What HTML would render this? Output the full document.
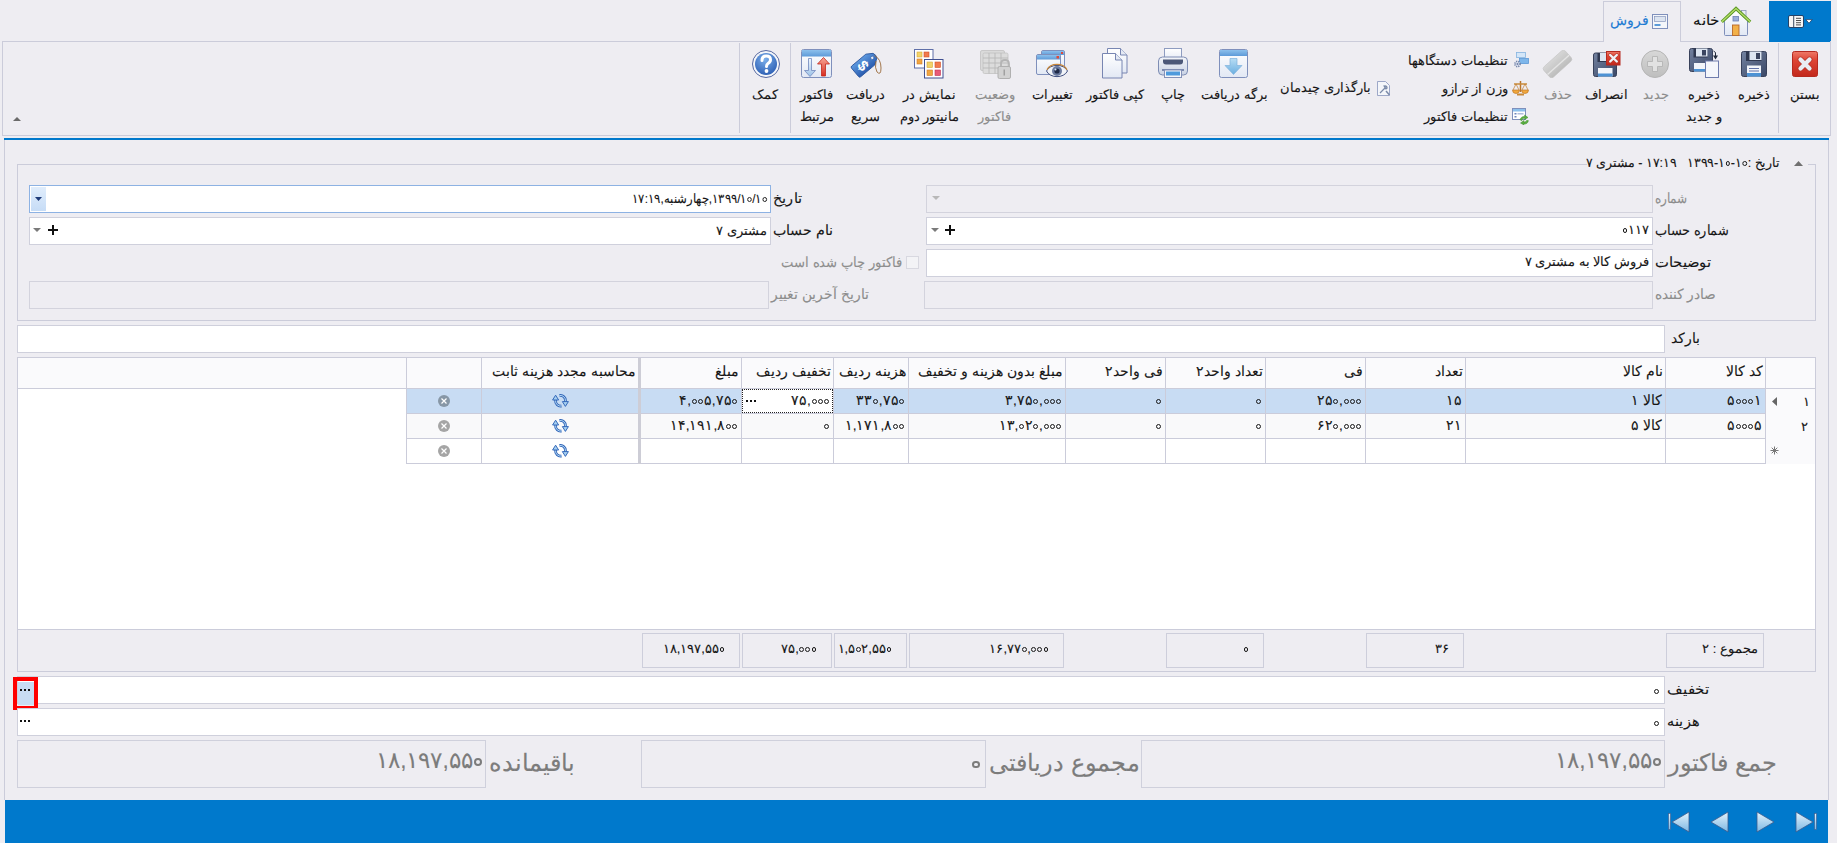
<!DOCTYPE html>
<html lang="fa">
<head>
<meta charset="utf-8">
<style>
*{box-sizing:border-box}
html,body{margin:0;padding:0}
body{width:1837px;height:843px;overflow:hidden;background:#EEEDF2;font-family:"Liberation Sans",sans-serif;font-size:13px;color:#161616;position:relative;-webkit-text-stroke:0.12px currentColor}
.a{position:absolute}
.t{position:absolute;white-space:nowrap;direction:rtl;line-height:16px}
.ln{position:absolute;background:#CBCCDA}
.fld{position:absolute;background:#fff;border:1px solid #CFD0DC}
.dis{position:absolute;background:#EEEDF2;border:1px solid #D3D3DD}
.gray{color:#8d8d8d}
.rb{position:absolute;text-align:center;direction:rtl;white-space:nowrap;line-height:22px}
.fc{position:absolute;border:1px solid #CDCEDB;background:#EEEDF2}
.n{unicode-bidi:isolate-override;direction:ltr}
.z{display:inline-block;width:0.37em;height:0.37em;border:1.2px solid currentColor;border-radius:50%;margin:0 0.05em;vertical-align:0.07em}
.bg .z{border-width:2px;width:0.36em;height:0.36em}
.dots{position:absolute;width:10px;height:2px;background:linear-gradient(90deg,#111 0,#111 2px,transparent 2px,transparent 4px,#111 4px,#111 6px,transparent 6px,transparent 8px,#111 8px,#111 10px)}
</style>
</head>
<body>
<div class="ln" style="left:2px;top:41px;width:1601px;height:1px"></div>
<div class="ln" style="left:1681px;top:41px;width:150px;height:1px"></div>
<div class="a" style="left:1603px;top:1px;width:78px;height:41px;border:1px solid #CBCCDA;border-bottom:none;background:#EEEDF2"></div>
<div class="t" style="right:188px;top:13px;font-size:13.5px;color:#1C7AD2">فروش</div>
<div class="t" style="left:1693px;top:12px;font-size:14px;transform:scaleX(1.087);transform-origin:0 50%;color:#111">خانه</div>
<div class="a" style="left:1769px;top:1px;width:62px;height:41px;background:#0079CC"></div>
<div class="a" style="left:2px;top:41px;width:1829px;height:95px;border:1px solid #CBCCDA;border-top:none"></div>
<div class="ln" style="left:1778px;top:43px;width:1px;height:90px"></div>
<div class="ln" style="left:790px;top:43px;width:1px;height:90px"></div>
<div class="ln" style="left:739px;top:43px;width:1px;height:90px"></div>
<svg class="a" style="left:12px;top:116px" width="10" height="6"><path d="M1 5 L5 1 L9 5 Z" fill="#6a6a6a"/></svg>
<!-- ===== RIBBON ICONS ===== -->
<svg class="a" style="left:1792px;top:51px" width="26" height="26" viewBox="0 0 26 26">
 <defs><linearGradient id="gRed" x1="0" y1="0" x2="0" y2="1"><stop offset="0" stop-color="#EE7A68"/><stop offset="0.35" stop-color="#DE4535"/><stop offset="1" stop-color="#C2281C"/></linearGradient></defs>
 <rect x="0.5" y="0.5" width="25" height="25" rx="2" fill="url(#gRed)" stroke="#B52A20"/>
 <path d="M8.5 8.5 L17.5 17.5 M17.5 8.5 L8.5 17.5" stroke="#B8382C" stroke-width="5.8" stroke-linecap="round"/>
 <path d="M8.5 8.5 L17.5 17.5 M17.5 8.5 L8.5 17.5" stroke="#E9EEF3" stroke-width="4.2" stroke-linecap="round"/>
</svg>
<svg class="a" style="left:1741px;top:51px" width="26" height="26" viewBox="0 0 26 26">
 <defs><linearGradient id="gFl" x1="0" y1="0" x2="1" y2="1"><stop offset="0" stop-color="#7382A0"/><stop offset="1" stop-color="#3A4766"/></linearGradient></defs>
 <rect x="0.5" y="0.5" width="25" height="25" rx="2" fill="url(#gFl)" stroke="#38415A"/>
 <rect x="5" y="0.5" width="15.5" height="9.5" fill="#2F3850"/>
 <rect x="8.5" y="0.5" width="12" height="8.5" fill="#DDE6F2"/>
 <rect x="15" y="2" width="4" height="6" fill="#3A4560"/>
 <rect x="6" y="14.5" width="14" height="11" fill="#F2F5FA"/>
 <rect x="8" y="17" width="10" height="1" fill="#6272A8"/>
 <rect x="8" y="19.5" width="10" height="1" fill="#6272A8"/>
 <rect x="6" y="22" width="14" height="3.5" fill="#4D92D4"/>
</svg>
<svg class="a" style="left:1689px;top:48px" width="32" height="31" viewBox="0 0 32 31">
 <rect x="0.5" y="0.5" width="23" height="23" rx="2" fill="url(#gFl)" stroke="#38415A"/>
 <rect x="4.5" y="0.5" width="14" height="9" fill="#2F3850"/>
 <rect x="7" y="0.5" width="11.5" height="8" fill="#DDE6F2"/>
 <rect x="13" y="2" width="4" height="5.5" fill="#3A4560"/>
 <rect x="5" y="15" width="15" height="8.5" fill="#F2F5FA"/>
 <rect x="5" y="21" width="15" height="2.5" fill="#4D92D4"/>
 <rect x="16.5" y="13" width="13" height="16.5" fill="#F4F6FB" stroke="#6E7CAD"/>
 <path d="M24.5 3 Q27.5 3.5 26.5 8" fill="none" stroke="#222A3A" stroke-width="1"/>
 <path d="M24 7.5 L29 7.5 L26.5 11.5 Z" fill="#222A3A"/>
</svg>
<svg class="a" style="left:1641px;top:50px" width="28" height="28" viewBox="0 0 28 28">
 <defs><linearGradient id="gGr" x1="0" y1="0" x2="0" y2="1"><stop offset="0" stop-color="#D8D8D8"/><stop offset="1" stop-color="#BEBEBE"/></linearGradient></defs>
 <circle cx="14" cy="14" r="13.5" fill="url(#gGr)" stroke="#B4B4B4"/>
 <path d="M11.5 6.5 h5 v5 h5 v5 h-5 v5 h-5 v-5 h-5 v-5 h5 z" fill="#E2E2E2" stroke="#B0B0B0" stroke-width="0.8"/>
</svg>
<svg class="a" style="left:1593px;top:51px" width="28" height="27" viewBox="0 0 28 27">
 <rect x="0.5" y="2" width="23" height="23.5" rx="2" fill="url(#gFl)" stroke="#38415A"/>
 <rect x="4.5" y="2" width="13" height="9" fill="#2F3850"/>
 <rect x="7" y="2" width="10" height="8" fill="#DDE6F2"/>
 <rect x="5" y="17" width="14.5" height="8.5" fill="#F2F5FA"/>
 <rect x="5" y="22.5" width="14.5" height="3" fill="#4D92D4"/>
 <rect x="13.5" y="0.5" width="13.5" height="13.5" fill="url(#gRed)" stroke="#B52A20"/>
 <path d="M17.2 4 L23.8 10.5 M23.8 4 L17.2 10.5" stroke="#B8382C" stroke-width="3.6" stroke-linecap="round"/>
 <path d="M17.2 4 L23.8 10.5 M23.8 4 L17.2 10.5" stroke="#EEF2F6" stroke-width="2.4" stroke-linecap="round"/>
</svg>
<svg class="a" style="left:1542px;top:50px" width="32" height="28" viewBox="0 0 32 28">
 <defs><linearGradient id="gEr" x1="0" y1="0" x2="0" y2="1"><stop offset="0" stop-color="#D6D6D6"/><stop offset="1" stop-color="#BDBDBD"/></linearGradient></defs>
 <g transform="rotate(-42 15.5 14)">
 <rect x="1" y="7" width="29" height="14" rx="3" fill="url(#gEr)" stroke="#C4C4C4" stroke-width="0.6"/>
 <rect x="1" y="14.5" width="29" height="1.4" fill="#E4E4E4"/>
 </g>
</svg>
<svg class="a" style="left:1219px;top:49px" width="29" height="29" viewBox="0 0 29 29">
 <defs><linearGradient id="gWin" x1="0" y1="0" x2="0" y2="1"><stop offset="0" stop-color="#FFFFFF"/><stop offset="1" stop-color="#E2E8F4"/></linearGradient>
 <linearGradient id="gBar" x1="0" y1="0" x2="0" y2="1"><stop offset="0" stop-color="#8CC0EC"/><stop offset="1" stop-color="#5D9AD8"/></linearGradient>
 <linearGradient id="gArr" x1="0" y1="0" x2="0" y2="1"><stop offset="0" stop-color="#B8DDF4"/><stop offset="1" stop-color="#6AAEE0"/></linearGradient></defs>
 <rect x="0.5" y="0.5" width="28" height="28" rx="2" fill="url(#gWin)" stroke="#7F90BC"/>
 <rect x="1" y="1" width="27" height="6" fill="url(#gBar)"/>
 <path d="M11 9.5 h7 v7 h5 l-8.5 9 l-8.5 -9 h5 z" fill="url(#gArr)" stroke="#7FB2DC" stroke-width="0.7"/>
</svg>
<svg class="a" style="left:1158px;top:48px" width="30" height="30" viewBox="0 0 30 30">
 <defs><linearGradient id="gPr" x1="0" y1="0" x2="0" y2="1"><stop offset="0" stop-color="#F4F6FA"/><stop offset="1" stop-color="#C9D2E4"/></linearGradient></defs>
 <rect x="6.5" y="0.5" width="17" height="13" fill="url(#gWin)" stroke="#8E9CC0"/>
 <rect x="0.5" y="9" width="29" height="18" rx="4" fill="url(#gPr)" stroke="#7E8DB4"/>
 <path d="M5 11.5 h20 v2 q0 3 -3 3 h-14 q-3 0 -3 -3 z" fill="#4C5878"/>
 <rect x="4" y="21" width="22" height="2" fill="#7C8AB0"/>
 <rect x="6.5" y="22" width="17" height="7.5" fill="#F4F6FA" stroke="#8391B8"/>
 <rect x="8" y="23.5" width="14" height="4" fill="#4E9ADC"/>
</svg>
<svg class="a" style="left:1102px;top:48px" width="28" height="31" viewBox="0 0 28 31">
 <path d="M5.5 0.5 h13 l6.5 6.5 v18 h-19.5 z" fill="url(#gWin)" stroke="#7886B2"/>
 <path d="M18.5 0.5 v6.5 h6.5" fill="#E4E9F3" stroke="#7886B2"/>
 <path d="M0.5 5.5 h13 l6.5 6.5 v18 h-19.5 z" fill="url(#gWin)" stroke="#7886B2"/>
 <path d="M13.5 5.5 v6.5 h6.5" fill="#E4E9F3" stroke="#7886B2"/>
</svg>
<svg class="a" style="left:1036px;top:50px" width="33" height="29" viewBox="0 0 33 29">
 <rect x="5.5" y="0.5" width="23" height="20" rx="1.5" fill="url(#gWin)" stroke="#7F90BC"/>
 <rect x="6" y="1" width="22" height="4" fill="url(#gBar)"/>
 <rect x="25" y="2" width="2" height="2" fill="#E04A3A"/>
 <rect x="0.5" y="4.5" width="24" height="20" rx="1.5" fill="url(#gWin)" stroke="#7F90BC"/>
 <rect x="1" y="5" width="23" height="4.5" fill="url(#gBar)"/>
 <rect x="20.5" y="6" width="2.5" height="2.5" fill="#E04A3A"/>
 <path d="M10.5 21 C14 13.5 28 13.5 31.5 21 C28 28.5 14 28.5 10.5 21 Z" fill="#F2F4F8" stroke="#3E4E80" stroke-width="1"/>
 <path d="M11 19.8 C14.5 12.5 27.5 12.5 31 19.8" fill="none" stroke="#C8883C" stroke-width="1.3"/>
 <circle cx="21" cy="21" r="5" fill="#6B7BA0"/>
 <circle cx="21" cy="21" r="2.6" fill="#1F2A48"/>
 <circle cx="19.5" cy="19.5" r="1" fill="#D8E4F4"/>
</svg>
<svg class="a" style="left:980px;top:50px" width="31" height="29" viewBox="0 0 31 29">
 <g fill="#DADADA" stroke="#C2C2C2" stroke-width="0.8">
 <rect x="0.5" y="0.5" width="24" height="20" rx="1.5"/>
 <rect x="3" y="3" width="25" height="20.5" rx="1.5" fill="#DCDCDC"/>
 </g>
 <path d="M3 8 h25 M3 13 h25 M3 18 h25 M9 3 v20.5 M15 3 v20.5 M21 3 v20.5" stroke="#B8B8B8" stroke-width="0.9"/>
 <path d="M21 17 v-3 q0 -4 4 -4 q4 0 4 4 v3" fill="none" stroke="#B4B4B4" stroke-width="1.8"/>
 <rect x="18" y="16.5" width="12.5" height="12" rx="1.5" fill="#D2D2D2" stroke="#B0B0B0"/>
 <rect x="23.5" y="19.5" width="1.5" height="6" fill="#A0A0A0"/>
</svg>
<svg class="a" style="left:914px;top:49px" width="30" height="30" viewBox="0 0 30 30">
 <rect x="0.5" y="0.5" width="18.5" height="18.5" fill="#FFFFFF" stroke="#5F6FA8"/>
 <rect x="3" y="3" width="5" height="5" fill="#F2D36A" stroke="#D8A838" stroke-width="0.6"/>
 <rect x="10" y="3" width="5" height="5" fill="#F27A4C" stroke="#D0502C" stroke-width="0.6"/>
 <rect x="3" y="10" width="5" height="5" fill="#F2A640" stroke="#D07A28" stroke-width="0.6"/>
 <rect x="10.5" y="10.5" width="18.5" height="18.5" fill="#FFFFFF" stroke="#3F4F90"/>
 <rect x="13" y="13" width="5.5" height="5.5" fill="#F2D36A" stroke="#D8A838" stroke-width="0.6"/>
 <rect x="21" y="13" width="5.5" height="5.5" fill="#F27A4C" stroke="#D0502C" stroke-width="0.6"/>
 <rect x="13" y="21" width="5.5" height="5.5" fill="#F2A640" stroke="#D07A28" stroke-width="0.6"/>
 <rect x="21" y="21" width="5.5" height="5.5" fill="#E85A78" stroke="#C03050" stroke-width="0.6"/>
</svg>
<svg class="a" style="left:850px;top:49px" width="33" height="30" viewBox="0 0 33 30">
 <defs><linearGradient id="gTag" x1="0" y1="0" x2="0" y2="1"><stop offset="0" stop-color="#5C98DE"/><stop offset="1" stop-color="#2A5CB0"/></linearGradient></defs>
 <g transform="rotate(-40 15 15)">
  <path d="M2 9.5 Q2 8 3.5 8 L22 8 L28 12 Q29.5 15 28 18 L22 22 L3.5 22 Q2 22 2 20.5 Z" fill="url(#gTag)" stroke="#24509A" stroke-width="0.8"/>
  <circle cx="24.5" cy="15" r="1.6" fill="#E8EEF8" stroke="#24509A" stroke-width="0.5"/>
  <text x="13" y="20.5" font-family="Liberation Sans" font-weight="bold" font-size="15" fill="#fff" text-anchor="middle" transform="rotate(90 13 15)">$</text>
 </g>
 <path d="M24.5 6.5 Q31 10 31 19 Q31 27 27 23 Q24.5 19 26 12" fill="none" stroke="#9A6A3A" stroke-width="0.9"/>
</svg>
<svg class="a" style="left:801px;top:49px" width="31" height="29" viewBox="0 0 31 29">
 <defs><linearGradient id="gUp" x1="0" y1="0" x2="0" y2="1"><stop offset="0" stop-color="#F8A898"/><stop offset="1" stop-color="#D82A1E"/></linearGradient>
 <linearGradient id="gDn" x1="0" y1="0" x2="0" y2="1"><stop offset="0" stop-color="#F0F6FC"/><stop offset="1" stop-color="#9CC2E8"/></linearGradient></defs>
 <rect x="0.5" y="0.5" width="30" height="28" rx="2" fill="url(#gWin)" stroke="#7F90BC"/>
 <rect x="1" y="1" width="29" height="6.5" fill="url(#gBar)"/>
 <path d="M7.5 9.5 h3 v12 h4 l-5.5 6 l-5.5 -6 h4 z" fill="url(#gDn)" stroke="#6E86BC" stroke-width="0.8"/>
 <path d="M20.5 27 v-12 h-4 l6 -6.5 l6 6.5 h-4 v12 z" fill="url(#gUp)" stroke="#C0281C" stroke-width="0.8"/>
</svg>
<svg class="a" style="left:752px;top:50px" width="28" height="28" viewBox="0 0 28 28">
 <defs><radialGradient id="gHelp" cx="0.45" cy="0.3" r="0.75"><stop offset="0" stop-color="#7AAEEA"/><stop offset="1" stop-color="#2A5CB2"/></radialGradient></defs>
 <circle cx="14" cy="14" r="13.5" fill="#F4F6FA" stroke="#5668A0" stroke-width="1"/>
 <circle cx="14" cy="14" r="11" fill="url(#gHelp)"/>
 <path d="M10 10.5 Q10 6 14.2 6 Q18.5 6 18.5 9.8 Q18.5 12 16 13.5 Q14.5 14.5 14.5 16.5" fill="none" stroke="#fff" stroke-width="3" stroke-linecap="round"/>
 <circle cx="14.5" cy="21" r="1.9" fill="#fff"/>
</svg>
<!-- small ribbon icons -->
<svg class="a" style="left:1513px;top:52px" width="16" height="16" viewBox="0 0 16 16">
 <rect x="3.5" y="0.5" width="9" height="5" fill="#D4E6F8" stroke="#86B4E0" stroke-width="0.8"/>
 <rect x="6.5" y="6.5" width="9" height="5" fill="#7EB6EA" stroke="#5A98D6" stroke-width="0.8"/>
 <circle cx="4.5" cy="12" r="2.6" fill="#E4EAF4" stroke="#7282A8" stroke-width="1.6" stroke-dasharray="1.2 0.9"/>
 <circle cx="4.5" cy="12" r="1.1" fill="#7282A8"/>
</svg>
<svg class="a" style="left:1512px;top:80px" width="17" height="16" viewBox="0 0 17 16">
 <path d="M8.5 1 v11" stroke="#B8742C" stroke-width="1.5"/>
 <path d="M2 4 h13" stroke="#C88A3A" stroke-width="1.5"/>
 <path d="M0.5 10 Q0.5 13.5 4 13.5 Q7.5 13.5 7.5 10 Z" fill="#F2A83C" stroke="#C07A28" stroke-width="0.7"/>
 <path d="M9.5 10 Q9.5 13.5 13 13.5 Q16.5 13.5 16.5 10 Z" fill="#F2A83C" stroke="#C07A28" stroke-width="0.7"/>
 <path d="M4 4 L1 10 M4 4 L7 10 M13 4 L10 10 M13 4 L16 10" stroke="#C07A28" stroke-width="0.7"/>
 <rect x="5" y="13.5" width="7" height="2" fill="#C88A3A"/>
</svg>
<svg class="a" style="left:1512px;top:108px" width="17" height="17" viewBox="0 0 17 17">
 <rect x="0.5" y="0.5" width="13" height="11" fill="#fff" stroke="#7F90BC"/>
 <rect x="1" y="1" width="12" height="2.5" fill="#8CC0EC"/>
 <rect x="2.5" y="5" width="2" height="1.5" fill="#6E86BC"/><rect x="5.5" y="5" width="6" height="1.5" fill="#B0BEDC"/>
 <rect x="2.5" y="8" width="2" height="1.5" fill="#6E86BC"/>
 <path d="M8 12 Q9 8 13 8.5 L12.5 7 L16 9.5 L12.5 11.5 L12.8 10 Q10 10 9.5 13" fill="#5BB040" stroke="#3A8A28" stroke-width="0.5"/>
 <path d="M16.5 12.5 Q15.5 16.5 11.5 16 L12 17 L8.5 15 L12 12.5 L11.7 14 Q14.5 14.5 15 12" fill="#5BB040" stroke="#3A8A28" stroke-width="0.5"/>
</svg>
<svg class="a" style="left:1377px;top:81px" width="14" height="15" viewBox="0 0 14 15">
 <path d="M0.5 0.5 h8 l4 4 v10 h-12 z" fill="#F4F6FA" stroke="#8896BC" stroke-width="0.8"/>
 <path d="M3 12 L8 7 M7 5 Q9 4.5 10 6 Q10.5 7.5 9 8 Z" stroke="#7A8AA8" stroke-width="1.2" fill="#A0AEC8"/>
 <path d="M9 10 L12.5 14" stroke="#7A8AA8" stroke-width="1.5"/>
</svg>
<!-- tab icons -->
<svg class="a" style="left:1652px;top:14px" width="16" height="15" viewBox="0 0 16 15">
 <rect x="0.5" y="0.5" width="15" height="14" fill="#F4F6FA" stroke="#7F90BC"/>
 <rect x="2.5" y="2.5" width="11" height="5" fill="#DCE4F0" stroke="#8896BC" stroke-width="0.7"/>
 <rect x="2.5" y="10" width="6" height="2" fill="#5A9AD8"/>
</svg>
<svg class="a" style="left:1720px;top:5px" width="32" height="32" viewBox="0 0 32 32">
 <rect x="21.5" y="5.5" width="4.5" height="9" fill="#E8ECF4" stroke="#8A96B8" stroke-width="0.8"/>
 <path d="M4.5 15.5 L16 5 L27.5 15.5 L27.5 29.5 Q27.5 30.5 26.5 30.5 L5.5 30.5 Q4.5 30.5 4.5 29.5 Z" fill="url(#gWin)" stroke="#7F8FBA" stroke-width="1"/>
 <path d="M1.8 16.8 L16 3.5 L30.2 16.8" fill="none" stroke="#5E9A28" stroke-width="3.2" stroke-linejoin="miter"/>
 <path d="M1.8 16.8 L16 3.5 L30.2 16.8" fill="none" stroke="#B8E06A" stroke-width="1.2" stroke-linejoin="miter"/>
 <rect x="13" y="11.5" width="5.5" height="4.5" fill="#9AAEDA" stroke="#6E80B4" stroke-width="0.8"/>
 <rect x="12.5" y="20" width="6.5" height="10.5" fill="#F2B048" stroke="#B8682A" stroke-width="0.9"/>
</svg>
<svg class="a" style="left:1788px;top:15px" width="27" height="13" viewBox="0 0 27 13">
 <rect x="0.5" y="0.5" width="15" height="12" rx="1.5" fill="#F6F6F6" stroke="#1C3458" stroke-width="0.9"/>
 <rect x="5.2" y="0.8" width="1" height="11.4" fill="#3A4A60"/>
 <path d="M8 3.3 h5 M8 5.5 h5 M8 7.7 h5 M8 9.9 h5" stroke="#505050" stroke-width="1"/>
 <path d="M17.8 4.6 L24.2 4.6 L21 8.2 Z" fill="#fff" stroke="#1C3458" stroke-width="0.7" stroke-linejoin="round"/>
</svg>


<div class="rb" style="left:1749.6px;top:84px;width:110px">بستن</div>
<div class="rb" style="left:1698.6px;top:84px;width:110px">ذخیره</div>
<div class="rb" style="left:1648.8px;top:84px;width:110px">ذخیره<br>و جدید</div>
<div class="rb gray" style="left:1600.7px;top:84px;width:110px">جدید</div>
<div class="rb" style="left:1551.5px;top:84px;width:110px">انصراف</div>
<div class="rb gray" style="left:1502.6px;top:84px;width:110px">حذف</div>
<div class="t" style="right:329px;top:53px">تنظیمات دستگاهها</div>
<div class="t" style="right:329px;top:81px">وزن از ترازو</div>
<div class="t" style="right:329px;top:109px">تنظیمات فاکتور</div>
<div class="t" style="right:466px;top:80px">بارگذاری چیدمان</div>
<div class="rb" style="left:1179.5px;top:84px;width:110px">برگه دریافت</div>
<div class="rb" style="left:1118.0px;top:84px;width:110px">چاپ</div>
<div class="rb" style="left:1060.3px;top:84px;width:110px">کپی فاکتور</div>
<div class="rb" style="left:997.7px;top:84px;width:110px">تغییرات</div>
<div class="rb gray" style="left:939.7px;top:84px;width:110px">وضعیت<br>فاکتور</div>
<div class="rb" style="left:874.5px;top:84px;width:110px">نمایش در<br>مانیتور دوم</div>
<div class="rb" style="left:810.7px;top:84px;width:110px">دریافت<br>سریع</div>
<div class="rb" style="left:761.5px;top:84px;width:110px">فاکتور<br>مرتبط</div>
<div class="rb" style="left:710.3px;top:84px;width:110px">کمک</div>
<div class="a" style="left:4px;top:138px;width:1825px;height:2px;background:#0079CC"></div>
<div class="ln" style="left:4px;top:140px;width:1px;height:660px"></div>
<div class="ln" style="left:1828px;top:140px;width:1px;height:660px"></div>
<div class="ln" style="left:17px;top:164px;width:1570px;height:1px"></div>
<div class="ln" style="left:1808px;top:164px;width:8px;height:1px"></div>
<div class="ln" style="left:17px;top:164px;width:1px;height:157px"></div>
<div class="ln" style="left:1815px;top:164px;width:1px;height:157px"></div>
<div class="ln" style="left:17px;top:320px;width:1799px;height:1px"></div>
<div class="t" style="right:57px;top:155px;transform:scaleX(0.965);transform-origin:100% 50%">تاریخ :<span class="n">۱۳۹۹-۱<i class="z"></i>-۱<i class="z"></i></span>&nbsp;&nbsp;&nbsp;<span class="n">۱۷:۱۹</span> - مشتری <span class="n">۷</span></div>
<svg class="a" style="left:1793px;top:160px" width="11" height="7"><path d="M1 6 L5.5 1 L10 6 Z" fill="#707070"/></svg>
<div class="dis" style="left:926px;top:185px;width:727px;height:28px"></div>
<svg class="a" style="left:932px;top:196px" width="9" height="5"><path d="M0 0 L8 0 L4 4 Z" fill="#b8b8b8"/></svg>
<div class="t" style="left:1655px;top:190px;font-size:14px;transform:scaleX(0.861);transform-origin:0 50%;color:#8d8d8d">شماره</div>
<div class="fld" style="left:926px;top:217px;width:727px;height:28px"></div>
<svg class="a" style="left:931px;top:228px" width="9" height="5"><path d="M0 0 L8 0 L4 4 Z" fill="#7a7a7a"/></svg>
<svg class="a" style="left:945px;top:225px" width="10" height="10"><path d="M4 0h2v4h4v2h-4v4h-2v-4h-4v-2h4z" fill="#111"/></svg>
<div class="t" style="right:188px;top:222px"><span class="n"><i class="z"></i>۱۱۷</span></div>
<div class="t" style="left:1655px;top:222px;font-size:14px;transform:scaleX(0.923);transform-origin:0 50%;">شماره حساب</div>
<div class="fld" style="left:926px;top:249px;width:727px;height:28px"></div>
<div class="t" style="right:188px;top:254px">فروش کالا به مشتری <span class="n">۷</span></div>
<div class="t" style="left:1655px;top:254px;font-size:14px;transform:scaleX(1.058);transform-origin:0 50%;">توضیحات</div>
<div class="dis" style="left:924px;top:281px;width:729px;height:28px"></div>
<div class="t" style="left:1655px;top:286px;font-size:14px;transform:scaleX(0.983);transform-origin:0 50%;color:#8d8d8d">صادر کننده</div>
<div class="fld" style="left:29px;top:185px;width:742px;height:28px;border-color:#8DB2E3"></div>
<div class="a" style="left:31px;top:187px;width:15px;height:24px;background:linear-gradient(#E0EDFC,#C6DCF6)"></div>
<svg class="a" style="left:35px;top:197px" width="8" height="5"><path d="M0 0 L7 0 L3.5 4 Z" fill="#1E3A78"/></svg>
<div class="t" style="right:1070px;top:191px;transform:scaleX(0.9);transform-origin:100% 50%"><span class="n">۱۳۹۹/۱<i class="z"></i>/۱<i class="z"></i></span>,چهارشنبه,<span class="n">۱۷:۱۹</span></div>
<div class="t" style="left:773px;top:190px;font-size:14px;transform:scaleX(1.037);transform-origin:0 50%;">تاریخ</div>
<div class="fld" style="left:29px;top:217px;width:742px;height:28px"></div>
<svg class="a" style="left:33px;top:228px" width="9" height="5"><path d="M0 0 L8 0 L4 4 Z" fill="#7a7a7a"/></svg>
<svg class="a" style="left:48px;top:225px" width="10" height="10"><path d="M4 0h2v4h4v2h-4v4h-2v-4h-4v-2h4z" fill="#111"/></svg>
<div class="t" style="right:1070px;top:223px">مشتری <span class="n">۷</span></div>
<div class="t" style="left:773px;top:222px;font-size:14px;transform:scaleX(1.018);transform-origin:0 50%;">نام حساب</div>
<div class="a" style="left:906px;top:256px;width:13px;height:13px;border:1px solid #D8D8E0;background:#F3F3F6"></div>
<div class="t" style="left:781px;top:254px;font-size:14px;transform:scaleX(0.938);transform-origin:0 50%;color:#8d8d8d">فاکتور چاپ شده است</div>
<div class="dis" style="left:29px;top:281px;width:740px;height:28px"></div>
<div class="t" style="left:771px;top:286px;font-size:14px;transform:scaleX(0.990);transform-origin:0 50%;color:#8d8d8d">تاریخ آخرین تغییر</div>
<div class="fld" style="left:17px;top:325px;width:1648px;height:28px"></div>
<div class="t" style="left:1671px;top:330px;font-size:14px;transform:scaleX(1.000);transform-origin:0 50%;">بارکد</div>
<div class="a" style="left:17px;top:357px;width:1799px;height:315px;border:1px solid #CBCCDA;background:#fff"></div>
<div class="a" style="left:18px;top:358px;width:1797px;height:30px;background:#FAFAFC"></div>
<div class="ln" style="left:18px;top:388px;width:1797px;height:1px"></div>
<div class="a" style="left:18px;top:630px;width:1797px;height:41px;background:#EEEDF2"></div>
<div class="ln" style="left:18px;top:629px;width:1797px;height:1px"></div>
<div class="a" style="left:1766px;top:389px;width:49px;height:75px;background:#FAFAFC"></div>
<div class="a" style="left:407px;top:389px;width:1358px;height:24px;background:#C8DCF3"></div>
<div class="a" style="left:407px;top:414px;width:1358px;height:24px;background:#F9F9FA"></div>
<div class="ln" style="left:406px;top:413px;width:1359px;height:1px"></div>
<div class="ln" style="left:406px;top:438px;width:1359px;height:1px"></div>
<div class="ln" style="left:406px;top:463px;width:1359px;height:1px"></div>
<div class="ln" style="left:406px;top:358px;width:1px;height:106px"></div>
<div class="ln" style="left:481px;top:358px;width:1px;height:106px"></div>
<div class="ln" style="left:741px;top:358px;width:1px;height:106px"></div>
<div class="ln" style="left:833px;top:358px;width:1px;height:106px"></div>
<div class="ln" style="left:908px;top:358px;width:1px;height:106px"></div>
<div class="ln" style="left:1065px;top:358px;width:1px;height:106px"></div>
<div class="ln" style="left:1165px;top:358px;width:1px;height:106px"></div>
<div class="ln" style="left:1265px;top:358px;width:1px;height:106px"></div>
<div class="ln" style="left:1365px;top:358px;width:1px;height:106px"></div>
<div class="ln" style="left:1465px;top:358px;width:1px;height:106px"></div>
<div class="ln" style="left:1665px;top:358px;width:1px;height:106px"></div>
<div class="ln" style="left:1765px;top:358px;width:1px;height:106px"></div>
<div class="a" style="left:638px;top:358px;width:3px;height:106px;background:#CDCDD6"></div>
<div class="t" style="right:74px;top:363px;font-size:14px">کد کالا</div>
<div class="t" style="right:174px;top:363px;font-size:14px">نام کالا</div>
<div class="t" style="right:374px;top:363px;font-size:14px">تعداد</div>
<div class="t" style="right:474px;top:363px;font-size:14px">فی</div>
<div class="t" style="right:574px;top:363px;font-size:14px">تعداد واحد<span class="n">۲</span></div>
<div class="t" style="right:674px;top:363px;font-size:14px">فی واحد<span class="n">۲</span></div>
<div class="t" style="right:774px;top:363px;font-size:14px">مبلغ بدون هزینه و تخفیف</div>
<div class="t" style="right:931px;top:363px;font-size:14px">هزینه ردیف</div>
<div class="t" style="right:1006px;top:363px;font-size:14px">تخفیف ردیف</div>
<div class="t" style="right:1098px;top:363px;font-size:14px">مبلغ</div>
<div class="t" style="right:1201px;top:363px;font-size:14px">محاسبه مجدد هزینه ثابت</div>
<div class="a" style="left:742px;top:389px;width:91px;height:24px;background:#fff;border:1px dotted #222"></div>
<div class="dots" style="left:746px;top:400px"></div>
<div class="t" style="right:75px;top:393px;font-size:13.6px"><span class="n">۵<i class="z"></i><i class="z"></i><i class="z"></i>۱</span></div>
<div class="t" style="right:175px;top:393px;font-size:13.6px">کالا <span class="n">۱</span></div>
<div class="t" style="right:375px;top:393px;font-size:13.6px"><span class="n">۱۵</span></div>
<div class="t" style="right:475px;top:393px;font-size:13.6px"><span class="n">۲۵<i class="z"></i>,<i class="z"></i><i class="z"></i><i class="z"></i></span></div>
<div class="t" style="right:575px;top:393px;font-size:13.6px"><span class="n"><i class="z"></i></span></div>
<div class="t" style="right:675px;top:393px;font-size:13.6px"><span class="n"><i class="z"></i></span></div>
<div class="t" style="right:775px;top:393px;font-size:13.6px"><span class="n">۳,۷۵<i class="z"></i>,<i class="z"></i><i class="z"></i><i class="z"></i></span></div>
<div class="t" style="right:932px;top:393px;font-size:13.6px"><span class="n">۳۳<i class="z"></i>,۷۵<i class="z"></i></span></div>
<div class="t" style="right:1007px;top:393px;font-size:13.6px"><span class="n">۷۵,<i class="z"></i><i class="z"></i><i class="z"></i></span></div>
<div class="t" style="right:1099px;top:393px;font-size:13.6px"><span class="n">۴,<i class="z"></i><i class="z"></i>۵,۷۵<i class="z"></i></span></div>
<div class="t" style="right:75px;top:418px;font-size:13.6px"><span class="n">۵<i class="z"></i><i class="z"></i><i class="z"></i>۵</span></div>
<div class="t" style="right:175px;top:418px;font-size:13.6px">کالا <span class="n">۵</span></div>
<div class="t" style="right:375px;top:418px;font-size:13.6px"><span class="n">۲۱</span></div>
<div class="t" style="right:475px;top:418px;font-size:13.6px"><span class="n">۶۲<i class="z"></i>,<i class="z"></i><i class="z"></i><i class="z"></i></span></div>
<div class="t" style="right:575px;top:418px;font-size:13.6px"><span class="n"><i class="z"></i></span></div>
<div class="t" style="right:675px;top:418px;font-size:13.6px"><span class="n"><i class="z"></i></span></div>
<div class="t" style="right:775px;top:418px;font-size:13.6px"><span class="n">۱۳,<i class="z"></i>۲<i class="z"></i>,<i class="z"></i><i class="z"></i><i class="z"></i></span></div>
<div class="t" style="right:932px;top:418px;font-size:13.6px"><span class="n">۱,۱۷۱,۸<i class="z"></i><i class="z"></i></span></div>
<div class="t" style="right:1007px;top:418px;font-size:13.6px"><span class="n"><i class="z"></i></span></div>
<div class="t" style="right:1099px;top:418px;font-size:13.6px"><span class="n">۱۴,۱۹۱,۸<i class="z"></i><i class="z"></i></span></div>
<div class="t" style="left:1803px;top:394px"><span class="n">۱</span></div>
<svg class="a" style="left:1772px;top:397px" width="6" height="9"><path d="M5 0 L0 4.5 L5 9 Z" fill="#666"/></svg>
<div class="t" style="left:1801px;top:419px"><span class="n">۲</span></div>
<svg class="a" style="left:1770px;top:446px" width="9" height="9" viewBox="0 0 9 9"><path d="M4.5 0.5v8M0.5 4.5h8M1.7 1.7l5.6 5.6M7.3 1.7l-5.6 5.6" stroke="#777" stroke-width="1"/></svg>
<svg class="a" style="left:438px;top:395px" width="12" height="12"><circle cx="6" cy="6" r="6" fill="#8797A6"/><path d="M3.5 3.5 L8.5 8.5 M8.5 3.5 L3.5 8.5" stroke="#fff" stroke-width="1.2"/></svg>
<svg class="a" style="left:552px;top:394px" width="17" height="14" viewBox="0 0 17 14"><g fill="none"><path d="M9.5 12 A5 5 0 0 1 3.6 6.5 L3.6 5.5" stroke="#3468BA" stroke-width="2.8"/><path d="M7.5 1.5 A5 5 0 0 1 13.4 7 L13.4 8" stroke="#3468BA" stroke-width="2.8"/><path d="M9.5 12 A5 5 0 0 1 3.6 6.5 L3.6 5.5" stroke="#B4D8F4" stroke-width="1"/><path d="M7.5 1.5 A5 5 0 0 1 13.4 7 L13.4 8" stroke="#B4D8F4" stroke-width="1"/></g><path d="M0.6 6 L3.6 1.2 L6.6 6 Z" fill="#A6D0F0" stroke="#3468BA" stroke-width="1" stroke-linejoin="round"/><path d="M10.4 7.6 L13.4 12.4 L16.4 7.6 Z" fill="#A6D0F0" stroke="#3468BA" stroke-width="1" stroke-linejoin="round"/></svg>
<svg class="a" style="left:438px;top:420px" width="12" height="12"><circle cx="6" cy="6" r="6" fill="#A5A5A5"/><path d="M3.5 3.5 L8.5 8.5 M8.5 3.5 L3.5 8.5" stroke="#fff" stroke-width="1.2"/></svg>
<svg class="a" style="left:552px;top:419px" width="17" height="14" viewBox="0 0 17 14"><g fill="none"><path d="M9.5 12 A5 5 0 0 1 3.6 6.5 L3.6 5.5" stroke="#3468BA" stroke-width="2.8"/><path d="M7.5 1.5 A5 5 0 0 1 13.4 7 L13.4 8" stroke="#3468BA" stroke-width="2.8"/><path d="M9.5 12 A5 5 0 0 1 3.6 6.5 L3.6 5.5" stroke="#B4D8F4" stroke-width="1"/><path d="M7.5 1.5 A5 5 0 0 1 13.4 7 L13.4 8" stroke="#B4D8F4" stroke-width="1"/></g><path d="M0.6 6 L3.6 1.2 L6.6 6 Z" fill="#A6D0F0" stroke="#3468BA" stroke-width="1" stroke-linejoin="round"/><path d="M10.4 7.6 L13.4 12.4 L16.4 7.6 Z" fill="#A6D0F0" stroke="#3468BA" stroke-width="1" stroke-linejoin="round"/></svg>
<svg class="a" style="left:438px;top:445px" width="12" height="12"><circle cx="6" cy="6" r="6" fill="#A5A5A5"/><path d="M3.5 3.5 L8.5 8.5 M8.5 3.5 L3.5 8.5" stroke="#fff" stroke-width="1.2"/></svg>
<svg class="a" style="left:552px;top:444px" width="17" height="14" viewBox="0 0 17 14"><g fill="none"><path d="M9.5 12 A5 5 0 0 1 3.6 6.5 L3.6 5.5" stroke="#3468BA" stroke-width="2.8"/><path d="M7.5 1.5 A5 5 0 0 1 13.4 7 L13.4 8" stroke="#3468BA" stroke-width="2.8"/><path d="M9.5 12 A5 5 0 0 1 3.6 6.5 L3.6 5.5" stroke="#B4D8F4" stroke-width="1"/><path d="M7.5 1.5 A5 5 0 0 1 13.4 7 L13.4 8" stroke="#B4D8F4" stroke-width="1"/></g><path d="M0.6 6 L3.6 1.2 L6.6 6 Z" fill="#A6D0F0" stroke="#3468BA" stroke-width="1" stroke-linejoin="round"/><path d="M10.4 7.6 L13.4 12.4 L16.4 7.6 Z" fill="#A6D0F0" stroke="#3468BA" stroke-width="1" stroke-linejoin="round"/></svg>
<div class="fc" style="left:1666px;top:633px;width:98px;height:35px"></div>
<div class="t" style="right:79px;top:641px;font-size:13px">مجموع : <span class="n">۲</span></div>
<div class="fc" style="left:1366px;top:633px;width:98px;height:35px"></div>
<div class="t" style="right:388px;top:641px;font-size:13px"><span class="n">۳۶</span></div>
<div class="fc" style="left:1166px;top:633px;width:98px;height:35px"></div>
<div class="t" style="right:588px;top:641px;font-size:13px"><span class="n"><i class="z"></i></span></div>
<div class="fc" style="left:909px;top:633px;width:155px;height:35px"></div>
<div class="t" style="right:788px;top:641px;font-size:13px"><span class="n">۱۶,۷۷<i class="z"></i>,<i class="z"></i><i class="z"></i><i class="z"></i></span></div>
<div class="fc" style="left:834px;top:633px;width:73px;height:35px"></div>
<div class="t" style="right:945px;top:641px;font-size:13px"><span class="n">۱,۵<i class="z"></i>۲,۵۵<i class="z"></i></span></div>
<div class="fc" style="left:742px;top:633px;width:90px;height:35px"></div>
<div class="t" style="right:1020px;top:641px;font-size:13px"><span class="n">۷۵,<i class="z"></i><i class="z"></i><i class="z"></i></span></div>
<div class="fc" style="left:642px;top:633px;width:98px;height:35px"></div>
<div class="t" style="right:1112px;top:641px;font-size:13px"><span class="n">۱۸,۱۹۷,۵۵<i class="z"></i></span></div>
<div class="fld" style="left:17px;top:676px;width:1648px;height:28px"></div>
<div class="t" style="right:177px;top:682px;font-size:14.5px"><span class="n"><i class="z"></i></span></div>
<div class="t" style="left:1667px;top:681px;font-size:14px;transform:scaleX(1.079);transform-origin:0 50%;">تخفیف</div>
<div class="a" style="left:18px;top:682px;width:16px;height:23px;background:#C8DCF3"></div>
<div class="dots" style="left:20px;top:689px"></div>
<div class="a" style="left:13px;top:677px;width:25px;height:33px;border:4px solid #FF0000"></div>
<div class="fld" style="left:17px;top:708px;width:1648px;height:28px"></div>
<div class="t" style="right:177px;top:714px;font-size:14.5px"><span class="n"><i class="z"></i></span></div>
<div class="t" style="left:1667px;top:713px;font-size:14px;transform:scaleX(1.033);transform-origin:0 50%;">هزینه</div>
<div class="dots" style="left:20px;top:720px"></div>
<div class="a" style="left:17px;top:740px;width:469px;height:48px;border:1px solid #CFD0DC"></div>
<div class="a" style="left:641px;top:740px;width:345px;height:48px;border:1px solid #CFD0DC"></div>
<div class="a" style="left:1141px;top:740px;width:524px;height:48px;border:1px solid #CFD0DC"></div>
<div class="t bg" style="right:1354px;top:748px;font-size:22.5px;line-height:26px;color:#7c7c7c"><span class="n">۱۸,۱۹۷,۵۵<i class="z"></i></span></div>
<div class="t" style="left:489px;top:750px;font-size:23.5px;line-height:26px;color:#7c7c7c">باقیمانده</div>
<div class="t bg" style="right:856px;top:750px;font-size:22px;line-height:26px;color:#7c7c7c"><span class="n"><i class="z"></i></span></div>
<div class="t" style="left:989px;top:750px;font-size:23.5px;line-height:26px;color:#7c7c7c">مجموع دریافتی</div>
<div class="t bg" style="right:175px;top:748px;font-size:22.5px;line-height:26px;color:#7c7c7c"><span class="n">۱۸,۱۹۷,۵۵<i class="z"></i></span></div>
<div class="t" style="left:1668px;top:750px;font-size:23.5px;line-height:26px;color:#7c7c7c">جمع فاکتور</div>
<div class="a" style="left:5px;top:800px;width:1823px;height:43px;background:#0079CC"></div>
<svg class="a" style="left:1667px;top:811px" width="24" height="22" viewBox="0 0 24 22"><defs><linearGradient id="gNav" x1="0" y1="0" x2="0" y2="1"><stop offset="0" stop-color="#E4F2FB"/><stop offset="1" stop-color="#7DB8E4"/></linearGradient></defs><rect x="1.5" y="2.5" width="2" height="16" fill="url(#gNav)" stroke="#3E5A8A" stroke-width="0.6"/><path d="M22 1 L22 21 L5 11 Z" fill="url(#gNav)" stroke="#3E5A8A" stroke-width="0.8"/></svg>
<svg class="a" style="left:1710px;top:811px" width="20" height="22" viewBox="0 0 20 22"><path d="M18 1 L18 21 L1 11 Z" fill="url(#gNav)" stroke="#3E5A8A" stroke-width="0.8"/></svg>
<svg class="a" style="left:1755px;top:811px" width="20" height="22" viewBox="0 0 20 22"><path d="M2 1 L2 21 L19 11 Z" fill="url(#gNav)" stroke="#3E5A8A" stroke-width="0.8"/></svg>
<svg class="a" style="left:1794px;top:811px" width="24" height="22" viewBox="0 0 24 22"><path d="M2 1 L2 21 L19 11 Z" fill="url(#gNav)" stroke="#3E5A8A" stroke-width="0.8"/><rect x="20.5" y="2.5" width="2" height="16" fill="url(#gNav)" stroke="#3E5A8A" stroke-width="0.6"/></svg>
</body>
</html>
